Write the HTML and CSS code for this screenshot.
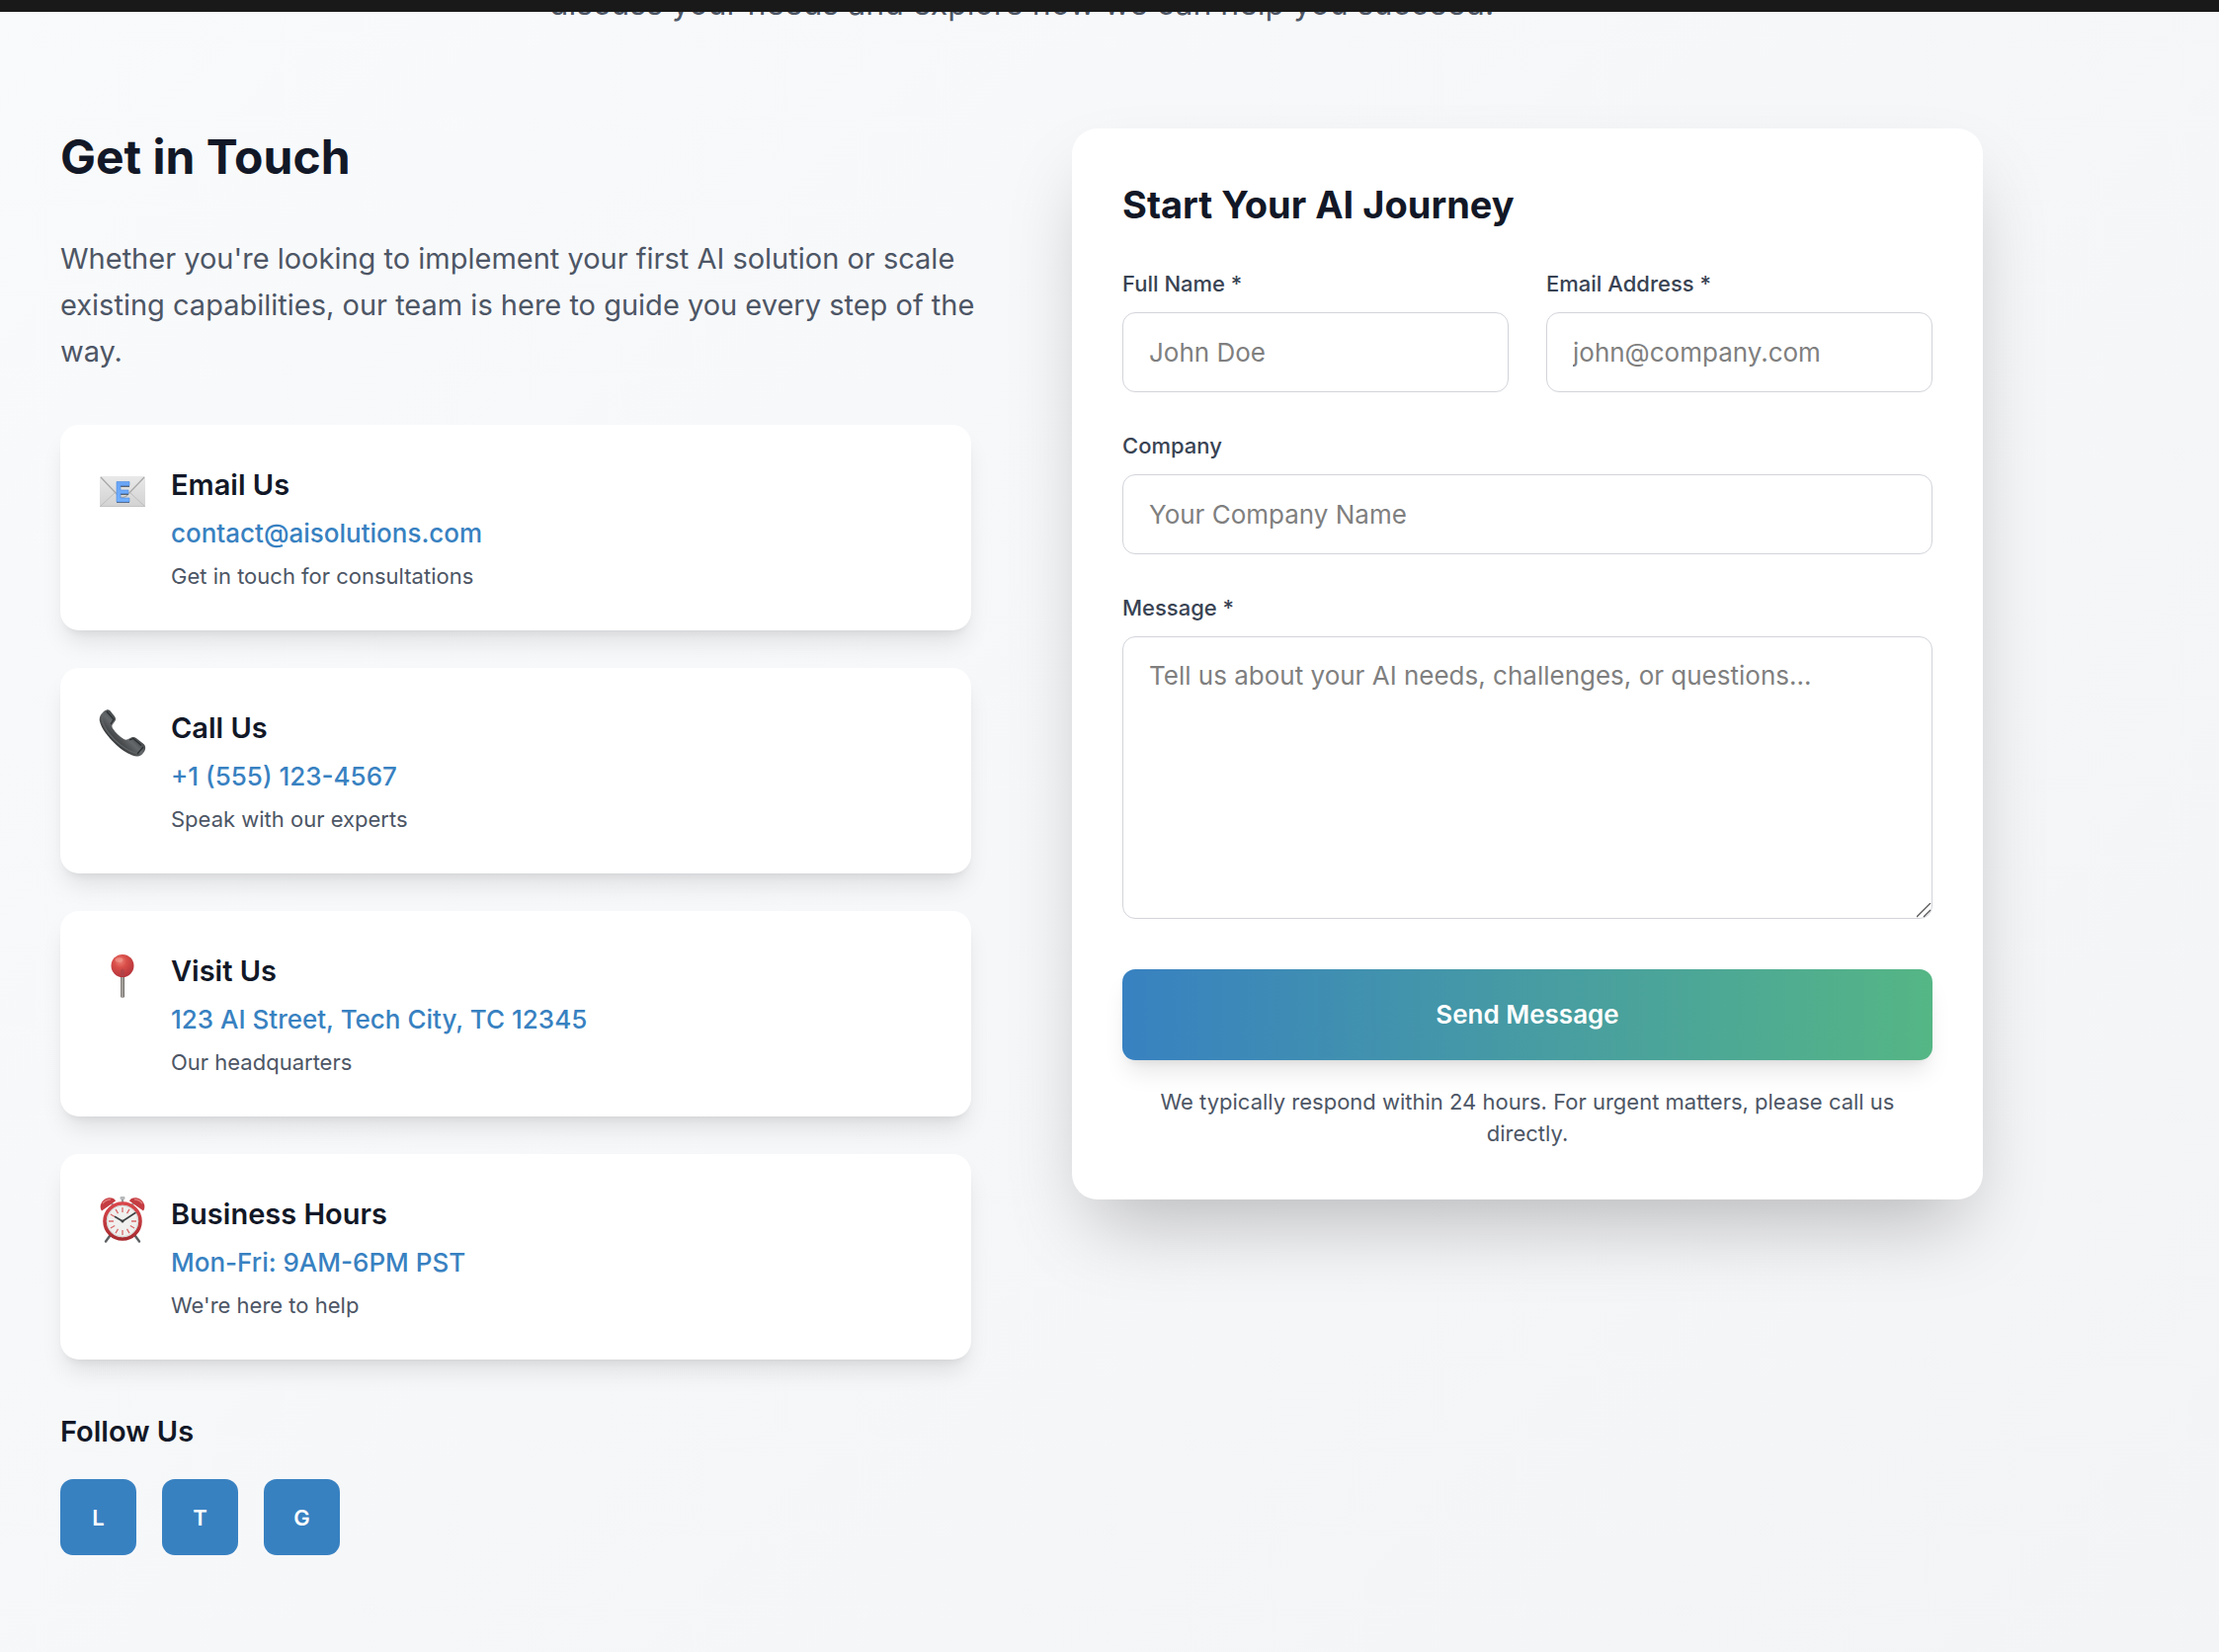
FILE: index.html
```html
<!DOCTYPE html>
<html lang="en">
<head>
<meta charset="utf-8">
<meta name="viewport" content="width=device-width, initial-scale=1">
<title>Contact</title>
<link rel="stylesheet" href="styles.css">
</head>
<body>
<header class="topbar"></header>
<main class="contact">
  <div class="container">
    <p class="lead">discuss your needs and explore how we can help you succeed.</p>
    <div class="columns">
      <section class="info">
        <h2 class="info-title">Get in Touch</h2>
        <p class="info-text">Whether you're looking to implement your first AI solution or scale existing capabilities, our team is here to guide you every step of the way.</p>
        <div class="cards">
          <article class="card">
            <svg class="card-icon" viewBox="-1 0 48 48" aria-hidden="true">
              <defs>
                <linearGradient id="paper" x1="0" y1="0" x2="0" y2="1"><stop offset="0" stop-color="#e9e9e9"/><stop offset="1" stop-color="#d2d2d2"/></linearGradient>
                <linearGradient id="letter" x1="0" y1="0" x2="0" y2="1"><stop offset="0" stop-color="#6aa5f5"/><stop offset="1" stop-color="#72b0ff"/></linearGradient>
              </defs>
              <rect x="1" y="10" width="46" height="31" rx="1" fill="url(#paper)"/>
              <path d="M1 40.500h46" stroke="#c4c4c4"/>
              <path d="M2 40l15-14M46 40L31 26" stroke="#bdbdbd" fill="none"/>
              <path d="M2 11l18 19q4 3 8 0l18-19" stroke="#a9a9a9" stroke-width="1.300" fill="none"/>
              <path d="M18 17h13v4h-9v4h8v4h-8v4h9v4H18z" fill="#5b6470"/>
              <path d="M18 15.500h13v4h-9v4.500h8v3.500h-8v4.500h9v4H18z" fill="url(#letter)" stroke="#4d8ce0" stroke-width=".6"/>
            </svg>
            <div class="card-body">
              <h3 class="card-title">Email Us</h3>
              <a class="card-link" href="mailto:contact@aisolutions.com">contact@aisolutions.com</a>
              <p class="card-note">Get in touch for consultations</p>
            </div>
          </article>
          <article class="card">
            <svg class="card-icon" viewBox="-1 0 48 48" aria-hidden="true">
              <defs><linearGradient id="handset" x1="0" y1="1" x2="1" y2="0"><stop offset=".3" stop-color="#343638"/><stop offset=".5" stop-color="#66696b"/><stop offset=".65" stop-color="#393c3e"/></linearGradient></defs>
              <path d="M8 .5c2-.6 3 .5 4 1.500l4 5c1.500 2 1.300 3.500.3 5l-2.500 3.500c-.8 1.500-.4 2.500.5 4 3 4.500 7 8 11 10.500 1.500 1 2.500 1 4 .3l4-2c1.500-.6 3-.4 4.500.7l7 5.500c2.500 2 2.700 4 2 6.500-1.300 3.500-4.500 6.700-8 6.500-6-.5-14-5-21-11.500C9 27.500 2.500 19.500.8 11.500 0 7 4 1.500 8 .5z" fill="url(#handset)"/>
              <path d="M7 4c-2 1.500-4 4-3.500 7C5 19 13 29 22 36c6 4.500 12 8 17 8.500" fill="none" stroke="#5f6264" stroke-width="1.500"/>
              <path d="M8 2l7 8-3 5M45 38l-6 7M31 31l4-1.500 8 7" fill="none" stroke="#2b2e31" stroke-width="1.200"/>
            </svg>
            <div class="card-body">
              <h3 class="card-title">Call Us</h3>
              <a class="card-link" href="tel:+15551234567">+1 (555) 123-4567</a>
              <p class="card-note">Speak with our experts</p>
            </div>
          </article>
          <article class="card">
            <svg class="card-icon" viewBox="-1 0 48 48" aria-hidden="true">
              <defs>
                <radialGradient id="pinhead" cx=".4" cy=".3" r=".7"><stop offset="0" stop-color="#ee8277"/><stop offset=".4" stop-color="#d94f49"/><stop offset="1" stop-color="#b5343b"/></radialGradient>
                <linearGradient id="needle"><stop offset="0" stop-color="#77736f"/><stop offset=".5" stop-color="#b5b0aa"/><stop offset="1" stop-color="#615e5b"/></linearGradient>
              </defs>
              <path d="M22 23h4v22q-2 2-4 0z" fill="url(#needle)"/>
              <circle cx="24" cy="13.500" r="11.500" fill="url(#pinhead)"/>
              <ellipse cx="20.500" cy="7.500" rx="4" ry="2.300" fill="#f4a69b" opacity=".5"/>
              <path d="M22 18q2-3 4 0v6h-4z" fill="#a64449" opacity=".6"/>
            </svg>
            <div class="card-body">
              <h3 class="card-title">Visit Us</h3>
              <a class="card-link" href="#map">123 AI Street, Tech City, TC 12345</a>
              <p class="card-note">Our headquarters</p>
            </div>
          </article>
          <article class="card">
            <svg class="card-icon" viewBox="-1 0 48 48" aria-hidden="true">
              <defs><linearGradient id="rim" x1="0" y1="0" x2="0" y2="1"><stop offset="0" stop-color="#d9474b"/><stop offset="1" stop-color="#a92c31"/></linearGradient></defs>
              <path d="M11 41l-4 5.500M37 41l4 5.500" stroke="#5d6062" stroke-width="2.400" stroke-linecap="round"/>
              <path d="M24 4v5M13 8l3 4M35 8l-3 4" stroke="#9b9b9b" stroke-width="2.400"/>
              <rect x="21.500" y="1" width="5" height="3" rx="1" fill="#b7b9ba"/>
              <path d="M3 15.500C-.5 11 3 4 9 2.500c3.500-.8 7 .3 8 3z" fill="#c43d42"/>
              <path d="M45 15.500C48.500 11 45 4 39 2.500c-3.500-.8-7 .3-8 3z" fill="#c43d42"/>
              <path d="M4 8q3-4 8-4M44 8q-3-4-8-4" stroke="#e07a78" stroke-width="1.500" fill="none"/>
              <circle cx="24" cy="26" r="18" fill="#f0f0ee" stroke="url(#rim)" stroke-width="3.600"/>
              <circle cx="24" cy="26" r="15.800" fill="none" stroke="#c9c9c9" stroke-width=".8"/>
              <g stroke="#d9696b" stroke-width="1.300">
                <path d="M24 12v5M24 35v5M10 26h5M33 26h5M17 13.900l2.500 4.300M28.500 33.800l2.500 4.300M31 13.900l-2.500 4.300M19.500 33.800L17 38.100M11.900 19l4.300 2.500M31.800 30.500l4.300 2.500M11.900 33l4.300-2.500"/>
              </g>
              <path d="M24 26l-7.500-4.500M24 26l13-8.500" stroke="#3d4042" stroke-width="1.500" stroke-linecap="round"/>
              <circle cx="24" cy="26" r="1.500" fill="#3d4042"/>
            </svg>
            <div class="card-body">
              <h3 class="card-title">Business Hours</h3>
              <a class="card-link" href="#hours">Mon-Fri: 9AM-6PM PST</a>
              <p class="card-note">We're here to help</p>
            </div>
          </article>
        </div>
        <h3 class="follow-title">Follow Us</h3>
        <nav class="socials" aria-label="Social media">
          <a class="social" href="#linkedin">L</a>
          <a class="social" href="#twitter">T</a>
          <a class="social" href="#github">G</a>
        </nav>
      </section>
      <form class="form">
        <h2 class="form-title">Start Your AI Journey</h2>
        <div class="form-row">
          <div class="field">
            <label class="label" for="name">Full Name *</label>
            <input class="input" id="name" type="text" placeholder="John Doe">
          </div>
          <div class="field">
            <label class="label" for="email">Email Address *</label>
            <input class="input" id="email" type="email" placeholder="john@company.com">
          </div>
        </div>
        <div class="field">
          <label class="label" for="company">Company</label>
          <input class="input" id="company" type="text" placeholder="Your Company Name">
        </div>
        <div class="field">
          <label class="label" for="message">Message *</label>
          <textarea class="input textarea" id="message" placeholder="Tell us about your AI needs, challenges, or questions..."></textarea>
        </div>
        <button class="submit" type="button">Send Message</button>
        <p class="form-note">We typically respond within 24 hours. For urgent matters, please call us directly.</p>
      </form>
    </div>
  </div>
</main>
</body>
</html>
```
FILE: styles.css
```css
* { box-sizing: border-box; }

body {
  margin: 0;
  font-family: Inter, "Liberation Sans", sans-serif;
  font-size: 26px;
  line-height: 38px;
  color: #121827;
}

h2, h3, p { margin: 0; }

a { text-decoration: none; }

.topbar {
  position: sticky;
  top: 0;
  z-index: 10;
  height: 12px;
  background: #191919;
}

/* The section starts underneath the sticky bar. */
.contact {
  min-height: calc(100vh + 22px);
  margin-top: -34px;
  padding: 0 10px 96px;
  background: linear-gradient(135deg, #f9fafc, #f3f4f6);
}

.container {
  max-width: 2048px;
  padding: 0 51px;
}

.lead {
  margin-bottom: 100px;
  font-size: 32px;
  line-height: 52px;
  text-align: center;
  color: #4d5665;
}

.columns {
  display: grid;
  grid-template-columns: 1fr 1fr;
  align-items: start;
  gap: 102px;
}

.info-title {
  margin-bottom: 50px;
  font-size: 48px;
  line-height: 58px;
  font-weight: 700;
}

.info-text {
  margin-right: -12px;
  margin-bottom: 51px;
  font-size: 29px;
  line-height: 47px;
  color: #4d5665;
}

.cards {
  display: grid;
  gap: 38px;
}

.card {
  display: flex;
  gap: 26px;
  padding: 38px;
  border-radius: 19px;
  background: #fff;
  box-shadow: 0 16px 24px -5px rgba(0, 0, 0, 0.1), 0 6px 10px -6px rgba(0, 0, 0, 0.1);
}

.card-icon {
  flex: none;
  width: 48px;
  height: 48px;
  margin-top: 4px;
  overflow: visible;
}

.card-title {
  margin-bottom: 8px;
  font-size: 29px;
  line-height: 45px;
  font-weight: 600;
}

.card-link {
  display: block;
  margin-bottom: 8px;
  font-weight: 500;
  color: #3881c1;
}

.card-note {
  font-size: 22px;
  line-height: 33px;
  color: #4d5665;
}

.follow-title {
  margin: 50px 0 26px;
  font-size: 29px;
  line-height: 45px;
  font-weight: 600;
}

.socials {
  display: flex;
  gap: 26px;
}

.social {
  display: grid;
  place-items: center;
  width: 77px;
  height: 77px;
  border-radius: 13px;
  background: #3881c1;
  color: #fff;
  font-size: 22px;
  font-weight: 600;
}

.form {
  display: grid;
  gap: 38px;
  padding: 51px;
  border-radius: 26px;
  background: #fff;
  box-shadow: 0 40px 80px -19px rgba(0, 0, 0, 0.25);
}

.form-title {
  font-size: 38px;
  line-height: 52px;
  font-weight: 700;
}

.form-row {
  display: grid;
  grid-template-columns: 1fr 1fr;
  gap: 38px;
}

.field {
  display: flex;
  flex-direction: column;
  gap: 13px;
}

.label {
  font-size: 22px;
  line-height: 32px;
  font-weight: 500;
  color: #394353;
}

.input {
  width: 100%;
  height: 81px;
  padding: 20px 26px;
  border: 1px solid #d2d4da;
  border-radius: 13px;
  background: #fff;
  font: inherit;
  color: #121827;
}

.input::placeholder { color: #7f7f7f; opacity: 1; }

.textarea {
  height: 286px;
  resize: vertical;
}

.textarea::-webkit-resizer {
  background: url("data:image/svg+xml,%3Csvg xmlns='http://www.w3.org/2000/svg' width='15' height='15'%3E%3Cpath d='M0 14L14 0M7 14L14 7' stroke='%23555' stroke-width='1.300'/%3E%3C/svg%3E") no-repeat;
}

.submit {
  height: 92px;
  margin-top: 13px;
  border: 0;
  border-radius: 13px;
  background: linear-gradient(90deg, #3881c1, #55b685);
  box-shadow: 0 16px 24px -5px rgba(0, 0, 0, 0.1), 0 6px 10px -6px rgba(0, 0, 0, 0.1);
  font: inherit;
  font-weight: 600;
  color: #fff;
}

.form-note {
  margin-top: -12px;
  font-size: 22px;
  line-height: 32px;
  text-align: center;
  color: #4d5665;
}
```
